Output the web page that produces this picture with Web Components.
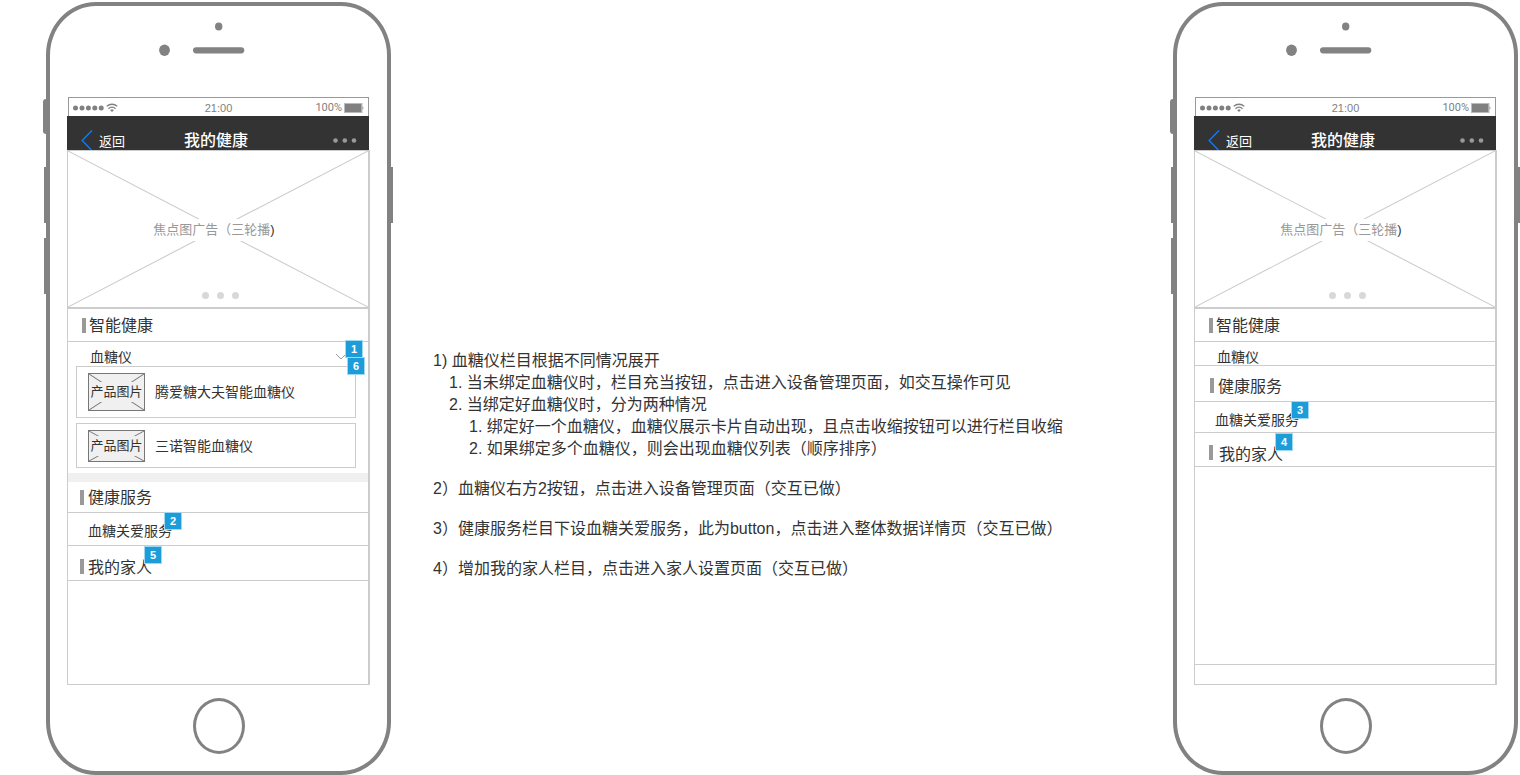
<!DOCTYPE html>
<html lang="zh-CN">
<head>
<meta charset="utf-8">
<title>我的健康 - 交互说明</title>
<style>
  body {
    margin: 0;
    background: #fff;
    color: #333;
    font-family: "Liberation Sans", "Noto Sans CJK SC", sans-serif;
    font-size: 16px;
    line-height: 22px;
  }
</style>
</head>
<body>
<spec-board>
  <phone-frame slot="left">
    <focus-banner></focus-banner>
    <section-title style="--height:32px;--inset:14px;--gap:3px">智能健康</section-title>
    <item-row class="open" style="--height:24px;--drop:5px;--inset:22px" expandable>血糖仪
      <note-badge slot="marks" style="top:-2px;right:5px">1</note-badge>
      <note-badge slot="marks" style="top:15px;right:3px">6</note-badge>
    </item-row>
    <device-list>
      <device-card style="--height:50px;--thumb:36px">腾爱糖大夫智能血糖仪</device-card>
      <device-card style="--height:43px;--thumb:30px">三诺智能血糖仪</device-card>
    </device-list>
    <section-title style="--height:30px;--inset:12px;--gap:4px">健康服务</section-title>
    <item-row style="--height:32px;--drop:4px;--inset:20px" mark="2">血糖关爱服务</item-row>
    <section-title style="--height:34px;--drop:8px;--inset:12px;--gap:4px" mark="5">我的家人</section-title>
  </phone-frame>

  <note-list slot="notes"></note-list>

  <phone-frame slot="right" toolbar>
    <focus-banner></focus-banner>
    <section-title style="--height:32px;--inset:14px;--gap:3px">智能健康</section-title>
    <item-row style="--height:23px;--drop:6px;--inset:22px">血糖仪</item-row>
    <section-title style="--height:35px;--drop:4px;--inset:15px;--gap:4px">健康服务</section-title>
    <item-row style="--height:30px;--drop:6px;--inset:20px" mark="3">血糖关爱服务</item-row>
    <section-title style="--height:33px;--drop:8px;--inset:14px;--gap:6px" mark="4">我的家人</section-title>
  </phone-frame>
</spec-board>

<script>
const define = (name, html, ready) => {
  const template = document.createElement('template');
  template.innerHTML = html;
  customElements.define(name, class extends HTMLElement {
    constructor() {
      super();
      this.attachShadow({ mode: 'open' }).append(template.content.cloneNode(true));
    }
    connectedCallback() {
      if (ready) ready(this, this.shadowRoot);
    }
  });
};

const addMark = (host, root) => {
  const mark = host.getAttribute('mark');
  if (!mark || root.querySelector('note-badge')) return;
  const badge = document.createElement('note-badge');
  badge.textContent = mark;
  root.querySelector('.label').append(badge);
};

/* Small blue annotation marker */
define('note-badge', `
<style>
  :host {
    position: absolute; z-index: 2; box-sizing: border-box;
    display: grid; place-items: center;
    width: 18px; height: 18px;
    background: #1c9dd9; border: 1px solid #9fd8f1;
    color: #fff; font: bold 11px/16px "Liberation Sans", sans-serif;
  }
</style><slot></slot>`);

/* Three columns: phone, notes, phone */
define('spec-board', `
<style>
  :host { display: block; }
  main { display: flex; align-items: flex-start; padding-left: 43px; }
  .notes { flex: 1; min-width: 0; padding: 350px 40px 0; }
</style>
<main>
  <slot name="left"></slot>
  <div class="notes"><slot name="notes"></slot></div>
  <slot name="right"></slot>
</main>`);

/* Carrier, clock, battery */
define('status-bar', `
<style>
  :host {
    display: grid; grid-template-columns: 1fr auto 1fr; align-items: center;
    box-sizing: border-box; height: 19px; margin: 0 1px; padding: 2px 4px 0;
    border: 1px solid #999; border-bottom: 0; color: #808080;
    font-size: 11px; line-height: 16px;
  }
  .end { display: flex; justify-content: flex-end; align-items: center; gap: 2px; font: 11px/16px Roboto, sans-serif; }
  svg { display: block; }
</style>
<svg width="46" height="12" viewBox="0 0 46 12" aria-hidden="true">
  <g fill="#808080">
    <circle cx="2.5" cy="6" r="2.5"/><circle cx="9" cy="6" r="2.5"/><circle cx="15.4" cy="6" r="2.5"/>
    <circle cx="21.8" cy="6" r="2.5"/><circle cx="28.2" cy="6" r="2.5"/>
    <path d="M37.2 8.2a2.4 2.4 0 0 1 3.6 0L39 10z"/>
  </g>
  <g fill="none" stroke="#808080" stroke-width="1.3">
    <path d="M33.7 4.4a7.6 7.6 0 0 1 10.6 0M35.5 6.7a5 5 0 0 1 7 0"/>
  </g>
</svg>
<span>21:00</span>
<span class="end">100%
  <svg width="20" height="10" viewBox="0 0 20 10" aria-hidden="true">
    <rect x=".5" y=".5" width="17.5" height="9" fill="#fff" stroke="#bbb"/>
    <rect x="1" y="1" width="16.5" height="8" fill="#808080"/>
    <path d="M18.6 3.3c1.1.4 1.1 3 0 3.4z" fill="#808080"/>
  </svg>
</span>`);

/* Dark title bar with back link and menu */
define('nav-bar', `
<style>
  :host {
    display: grid; grid-template-columns: 1fr auto 1fr;
    height: 34px; margin-right: 1px; background: #333; color: #fff; overflow: hidden;
  }
  a { display: flex; gap: 6px; padding: 14px 0 0 14px; color: inherit; text-decoration: none; font-size: 13px; line-height: 24px; }
  h1 { margin: 0; padding: 14px 4px 0 0; font-size: 16px; line-height: 22px; font-weight: 500; }
  button { justify-self: end; border: 0; padding: 14px 12px 0 0; background: none; display: flex; align-items: start; }
  svg { display: block; }
</style>
<a href="#back">
  <svg width="12" height="20" viewBox="0 0 12 20" aria-hidden="true"><path d="M11 .4 1.2 10.4 10.3 20" fill="none" stroke="#0b7bff" stroke-width="1.4"/></svg>
  返回
</a>
<h1>我的健康</h1>
<button type="button" aria-label="更多">
  <svg width="25" height="20" viewBox="0 0 25 20"><g fill="#999"><circle cx="3.5" cy="10.5" r="2.3"/><circle cx="12.8" cy="10.5" r="2.3"/><circle cx="22" cy="10.5" r="2.3"/></g></svg>
</button>`);

/* Phone outline with its screen */
define('phone-frame', `
<style>
  :host { display: block; position: relative; flex: none; width: 350px; padding-top: 2px; }
  .body {
    box-sizing: border-box; margin: 0 2px 0 3px; padding: 0 17px 17px;
    border: 4px solid #828282; border-radius: 50px / 53px; background: #fff;
  }
  .top { display: block; width: 100%; height: 91px; }
  .key { position: absolute; background: #828282; width: 3px; }
  .mute { left: 0; top: 99px; height: 35px; border-radius: 3px 0 0 3px; }
  .up, .down, .power { width: 2px; height: 56px; }
  .up { left: 1px; top: 167px; }
  .down { left: 1px; top: 238px; }
  .power { right: 0; top: 167px; }
  .content {
    box-sizing: border-box; min-height: 535px; display: flex; flex-direction: column;
    border: solid #ccc; border-width: 0 2px 1px 1px;
  }
  .toolbar { display: none; margin-top: auto; height: 19px; border-top: 1px solid #ccc; }
  :host([toolbar]) .toolbar { display: block; }
  .home {
    display: block; box-sizing: border-box; width: 52px; height: 56px; margin: 13px auto 0;
    padding: 0; border: 3px solid #828282; border-radius: 50%; background: #fff;
  }
</style>
<i class="key mute"></i><i class="key up"></i><i class="key down"></i><i class="key power"></i>
<div class="body">
  <svg class="top" viewBox="0 0 303 91" aria-hidden="true">
    <g fill="#828282">
      <ellipse cx="151.7" cy="20.4" rx="3.7" ry="4"/>
      <ellipse cx="97.5" cy="44.3" rx="5.4" ry="5.7"/>
      <rect x="126" y="41.2" width="51.3" height="6.2" rx="3.1"/>
    </g>
  </svg>
  <status-bar></status-bar>
  <nav-bar></nav-bar>
  <div class="content"><slot></slot><div class="toolbar"></div></div>
  <button class="home" type="button" aria-label="Home"></button>
</div>`);

/* Carousel placeholder */
define('focus-banner', `
<style>
  :host { display: grid; height: 156px; border: solid #ccc; border-width: 1px 0 2px; }
  svg, .label, .dots { grid-area: 1 / 1; }
  svg { display: block; width: 100%; height: 156px; }
  .label {
    place-self: center; margin: 2px 8px 0 0; background: #fff; color: #999;
    font-size: 13px; line-height: 22px; white-space: nowrap;
  }
  .label b { color: #333; font-weight: 400; }
  .dots { place-self: end center; display: flex; gap: 8px; padding: 0 0 8px 4px; }
  .dots i { width: 7px; height: 7px; border-radius: 50%; background: #d8d8d8; }
</style>
<svg viewBox="0 0 300 156" preserveAspectRatio="none" aria-hidden="true">
  <path d="M0 0 300 156M300 0 0 156" stroke="#ccc" stroke-width="1.1" fill="none"/>
</svg>
<span class="label">焦点图广告（三轮播<b>)</b></span>
<span class="dots"><i></i><i></i><i></i></span>`);

/* Section heading with grey bar */
define('section-title', `
<style>
  :host { display: block; border-bottom: 1px solid #ccc; }
  h2 {
    display: flex; align-items: stretch; gap: var(--gap); box-sizing: border-box;
    height: var(--height); margin: 0; padding-left: var(--inset);
    font-size: 16px; font-weight: 400; line-height: 20px;
  }
  i { align-self: center; width: 4px; height: 15px; margin-top: calc(var(--drop, 0px) * 3 / 4); background: #999; }
  .label { position: relative; display: flex; align-items: center; box-sizing: border-box; padding-top: calc(var(--drop, 0px) + 2px); }
  note-badge { top: 0; left: calc(100% - 8px); }
</style>
<h2><i></i><span class="label"><slot></slot></span></h2>`, addMark);

/* Tappable row */
define('item-row', `
<style>
  :host { display: block; position: relative; border-bottom: 1px solid #ccc; }
  :host(.open) { border-bottom: 0; }
  .row { display: flex; justify-content: space-between; height: var(--height); padding-left: var(--inset); }
  a {
    position: relative; display: flex; align-items: center; box-sizing: border-box;
    padding-top: var(--drop, 0px); color: inherit; text-decoration: none;
    font-size: 14px; line-height: 18px;
  }
  button { display: none; border: 0; padding: 6px 21px 0 0; background: none; }
  :host([expandable]) button { display: block; }
  svg { display: block; }
  note-badge { top: -1px; left: calc(100% - 8px); }
</style>
<div class="row">
  <a class="label" href="#detail"><slot></slot></a>
  <button type="button" aria-label="收缩"><svg width="12" height="8" viewBox="0 0 12 8"><path d="M1 1l5 5 5-5" fill="none" stroke="#999"/></svg></button>
</div>
<slot name="marks"></slot>`, addMark);

define('device-list', `
<style>
  :host { display: flex; flex-direction: column; gap: 5px; padding: 0 12px 5px 8px; border-bottom: 9px solid #f0f0f0; }
</style><slot></slot>`);

/* Bound device with picture placeholder */
define('device-card', `
<style>
  :host {
    display: flex; align-items: center; gap: 10px; height: var(--height);
    padding-left: 11px; border: 1px solid #ccc; font-size: 14px; line-height: 18px;
  }
  .thumb { display: grid; place-items: center; width: 55px; height: var(--thumb); border: 1px solid #777; background: #f0f0f0; }
  svg, .thumb span { grid-area: 1 / 1; }
  svg { display: block; width: 100%; height: var(--thumb); }
  .thumb span { background: #f0f0f0; font-size: 13px; line-height: 20px; white-space: nowrap; }
</style>
<div class="thumb">
  <svg viewBox="0 0 54 36" preserveAspectRatio="none" aria-hidden="true"><path d="M0 0 54 36M54 0 0 36" stroke="#777" fill="none"/></svg>
  <span>产品图片</span>
</div>
<slot></slot>`);

/* Interaction notes */
define('note-list', `
<style>
  :host { display: block; }
  ul { list-style: none; margin: 0; padding: 0; }
  li > ul { padding-left: 16px; }
  li li > ul { padding-left: 20px; }
  .top { display: flex; flex-direction: column; gap: 18px; }
</style>
<ul class="top">
  <li>1) 血糖仪栏目根据不同情况展开
    <ul>
      <li>1. 当未绑定血糖仪时，栏目充当按钮，点击进入设备管理页面，如交互操作可见</li>
      <li>2. 当绑定好血糖仪时，分为两种情况
        <ul>
          <li>1. 绑定好一个血糖仪，血糖仪展示卡片自动出现，且点击收缩按钮可以进行栏目收缩</li>
          <li>2. 如果绑定多个血糖仪，则会出现血糖仪列表（顺序排序）</li>
        </ul>
      </li>
    </ul>
  </li>
  <li>2）血糖仪右方2按钮，点击进入设备管理页面（交互已做）</li>
  <li>3）健康服务栏目下设血糖关爱服务，此为button，点击进入整体数据详情页（交互已做）</li>
  <li>4）增加我的家人栏目，点击进入家人设置页面（交互已做）</li>
</ul>`);
</script>
</body>
</html>
